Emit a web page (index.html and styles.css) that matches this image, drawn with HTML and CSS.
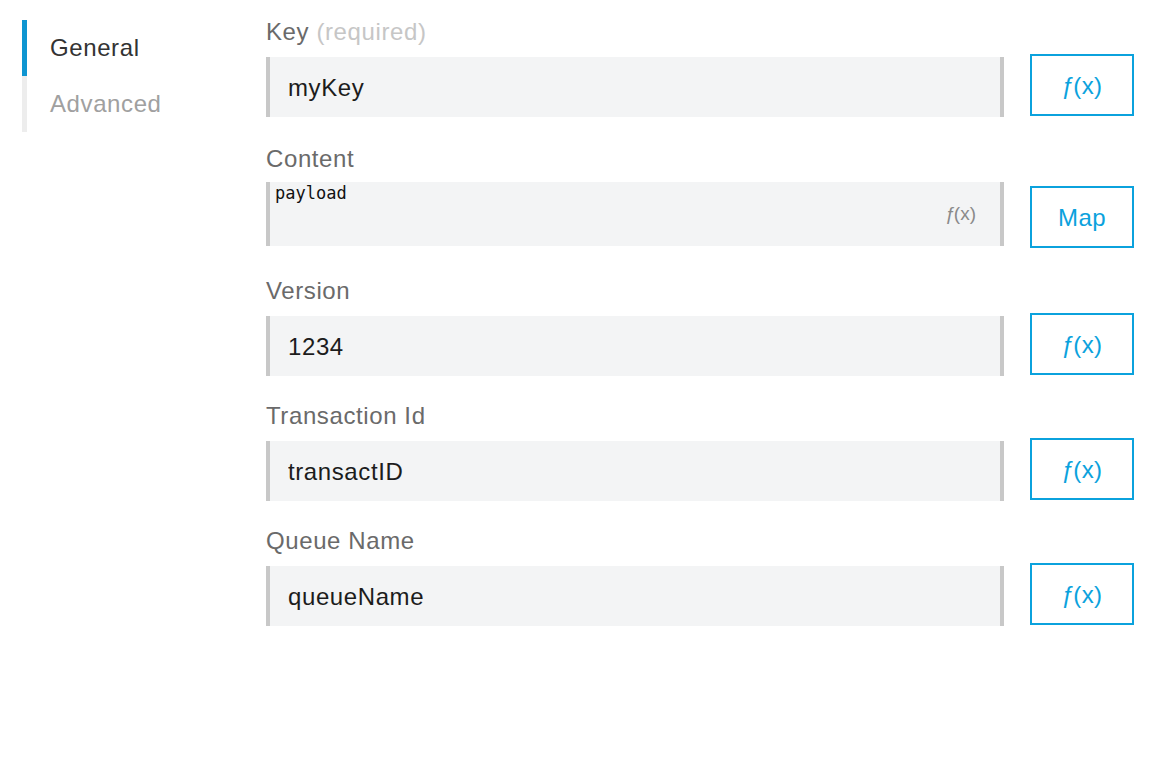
FILE: index.html
```html
<!DOCTYPE html>
<html lang="en">
<head>
<meta charset="utf-8">
<title>Settings</title>
<link rel="stylesheet" href="styles.css">
</head>
<body>
<div class="page">
  <nav class="sidebar">
    <a class="nav-item active">General</a>
    <a class="nav-item">Advanced</a>
  </nav>
  <main class="form">
    <div class="field">
      <label class="label">Key <span class="hint">(required)</span></label>
      <div class="row">
        <input class="input" type="text" value="myKey">
        <button class="btn"><span class="fx-f">ƒ</span>(x)</button>
      </div>
    </div>
    <div class="field field-tall">
      <label class="label label-tight">Content</label>
      <div class="row">
        <div class="area-wrap">
          <textarea class="area">payload</textarea>
          <span class="area-fx"><span class="fx-f">ƒ</span>(x)</span>
        </div>
        <button class="btn btn-map">Map</button>
      </div>
    </div>
    <div class="field">
      <label class="label">Version</label>
      <div class="row">
        <input class="input" type="text" value="1234">
        <button class="btn"><span class="fx-f">ƒ</span>(x)</button>
      </div>
    </div>
    <div class="field">
      <label class="label">Transaction Id</label>
      <div class="row">
        <input class="input" type="text" value="transactID">
        <button class="btn"><span class="fx-f">ƒ</span>(x)</button>
      </div>
    </div>
    <div class="field">
      <label class="label">Queue Name</label>
      <div class="row">
        <input class="input" type="text" value="queueName">
        <button class="btn"><span class="fx-f">ƒ</span>(x)</button>
      </div>
    </div>
  </main>
</div>
</body>
</html>
```

FILE: styles.css
```css
html, body {
  margin: 0;
  padding: 0;
  background: #ffffff;
}

body {
  font-family: "Liberation Sans", Arial, Helvetica, sans-serif;
  color: #222;
}

.page {
  display: flex;
  align-items: flex-start;
  padding-left: 22px;
  padding-top: 20px;
}

.sidebar {
  width: 244px;
  flex: none;
  display: flex;
  flex-direction: column;
}

.nav-item {
  display: flex;
  align-items: center;
  height: 56px;
  padding-left: 23px;
  border-left: 5px solid #ededed;
  font-size: 24px;
  letter-spacing: 0.6px;
  color: #a0a0a0;
  cursor: pointer;
}

.nav-item.active {
  border-left-color: #0e95d1;
  color: #333;
}

.form {
  width: 868px;
  flex: none;
  display: flex;
  flex-direction: column;
  margin-top: -2px;
}

.field {
  display: flex;
  flex-direction: column;
  margin-bottom: 26px;
}

.field-tall {
  margin-bottom: 29px;
}

.label {
  font-size: 24px;
  line-height: 28px;
  letter-spacing: 0.6px;
  color: #6a6a6a;
  margin-bottom: 11px;
}

.label-tight {
  margin-top: 2px;
  margin-bottom: 9px;
}

.hint {
  color: #c6c6c6;
}

.row {
  display: flex;
  align-items: flex-start;
  gap: 26px;
}

.input {
  box-sizing: border-box;
  width: 738px;
  height: 60px;
  margin: 0;
  padding: 2px 0 0 18px;
  border: 0;
  border-left: 4px solid #c8c8c8;
  border-right: 4px solid #c8c8c8;
  background: #f3f4f5;
  font-family: "Liberation Sans", Arial, Helvetica, sans-serif;
  font-size: 24px;
  letter-spacing: 0.6px;
  color: #1c1c1c;
  outline: none;
}

.area-wrap {
  position: relative;
  width: 738px;
  height: 64px;
  flex: none;
}

.area {
  box-sizing: border-box;
  display: block;
  width: 100%;
  height: 100%;
  margin: 0;
  padding: 1px 0 0 5px;
  border: 0;
  border-left: 4px solid #c8c8c8;
  border-right: 4px solid #c8c8c8;
  background: #f3f4f5;
  font-family: "DejaVu Sans Mono", "Liberation Mono", monospace;
  font-size: 17px;
  line-height: 20px;
  color: #111;
  resize: none;
  overflow: hidden;
  outline: none;
}

.area-fx {
  position: absolute;
  right: 28px;
  top: 50%;
  transform: translateY(-50%);
  font-size: 19px;
  color: #8a8a8a;
}

.fx-f {
  display: inline-block;
  margin-right: -2px;
}

.btn {
  box-sizing: border-box;
  width: 104px;
  height: 62px;
  flex: none;
  margin: -3px 0 0 0;
  padding: 2px 0 0 0;
  border: 2px solid #0ba2dd;
  background: #fff;
  color: #0ba2dd;
  font-family: "Liberation Sans", Arial, Helvetica, sans-serif;
  font-size: 24px;
  letter-spacing: 0.4px;
  cursor: pointer;
}

.btn-map {
  margin-top: 4px;
}
```
